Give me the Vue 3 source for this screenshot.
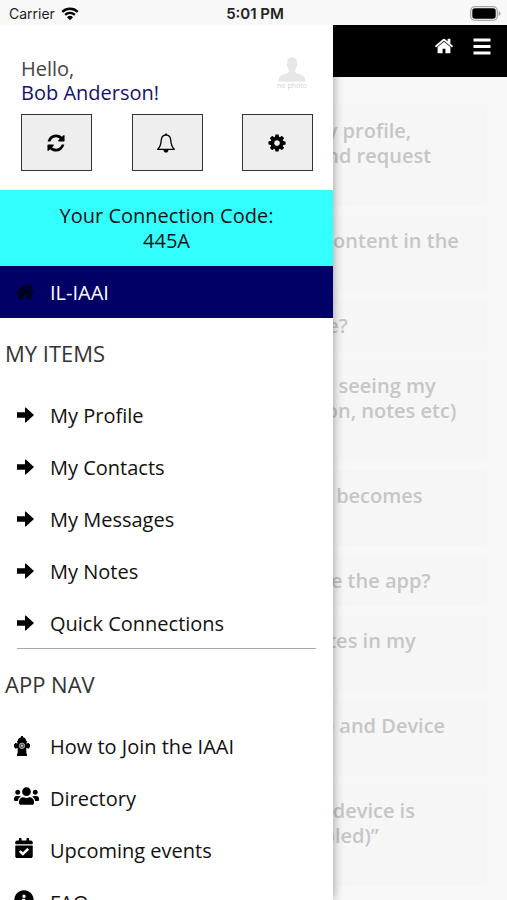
<script setup>
import { h } from 'vue'

const icons = {
  home: { box: '0 0 1792 1792', d: 'M1472 992v480q0 26-19 45t-45 19h-384v-384h-256v384h-384q-26 0-45-19t-19-45v-480q0-1 .5-3t.5-3l575-474 575 474q1 2 1 6zm223-69l-62 74q-8 9-21 11h-3q-13 0-21-7l-692-577-692 577q-12 8-24 7-13-2-21-11l-62-74q-8-10-7-23.5t11-21.5l719-599q32-26 76-26t76 26l244 204v-195q0-14 9-23t23-9h192q14 0 23 9t9 23v408l219 182q10 8 11 21.5t-7 23.5z' },
  refresh: { box: '0 0 1792 1792', d: 'M1639 1056q0 5-1 7-64 268-268 434.500t-478 166.500q-146 0-282.500-55t-243.500-157l-129 129q-19 19-45 19t-45-19-19-45v-448q0-26 19-45t45-19h448q26 0 45 19t19 45-19 45l-137 137q71 66 161 102t187 36q134 0 250-65t186-179q11-17 53-117 8-23 30-23h192q13 0 22.500 9.500t9.500 22.500zm25-800v448q0 26-19 45t-45 19h-448q-26 0-45-19t-19-45 19-45l138-138q-148-137-349-137-134 0-250 65t-186 179q-11 17-53 117-8 23-30 23h-199q-13 0-22.500-9.500t-9.500-22.500v-7q65-268 270-434.500t480-166.500q146 0 284 55.500t245 156.500l130-129q19-19 45-19t45 19 19 45z' },
  cog: { box: '0 0 1792 1792', d: 'M1152 896q0-106-75-181t-181-75-181 75-75 181 75 181 181 75 181-75 75-181zm512-109v222q0 12-8 23t-20 13l-185 28q-19 54-39 91 35 50 107 138 10 12 10 25t-9 23q-27 37-99 108t-94 71q-12 0-26-9l-138-108q-44 23-91 38-16 136-29 186-7 28-36 28h-222q-14 0-24.500-8.500t-11.500-21.500l-28-184q-49-16-90-37l-141 107q-10 9-25 9-14 0-25-11-126-114-165-168-7-10-7-23 0-12 8-23 15-21 51-66.500t54-70.500q-27-50-41-99l-183-27q-13-2-21-12.500t-8-23.500v-222q0-12 8-23t19-13l186-28q14-46 39-92-40-57-107-138-10-12-10-24 0-10 9-23 26-36 98.500-107.500t94.500-71.500q13 0 26 10l138 107q44-23 91-38 16-136 29-186 7-28 36-28h222q14 0 24.500 8.500t11.500 21.500l28 184q49 16 90 37l142-107q9-9 24-9 13 0 25 10 129 119 165 170 7 8 7 22 0 12-8 23-15 21-51 66.500t-54 70.500q26 50 41 98l183 28q13 2 21 12.500t8 23.500z' },
  arrow: { box: '0 0 20 20', d: 'M2 7.200h8V3q0-.9.800-.4L19 10l-8.200 7.400q-.8.500-.8-.4v-4.200H2z' },
  users: { box: '0 0 640 512', d: 'M96 224c35.300 0 64-28.700 64-64s-28.700-64-64-64-64 28.700-64 64 28.700 64 64 64zm448 0c35.300 0 64-28.700 64-64s-28.700-64-64-64-64 28.700-64 64 28.700 64 64 64zm32 32h-64c-17.600 0-33.500 7.100-45.100 18.600 40.300 22.100 68.900 62 75.100 109.400h66c17.700 0 32-14.300 32-32v-32c0-35.300-28.700-64-64-64zm-256 0c61.900 0 112-50.100 112-112S381.900 32 320 32 208 82.100 208 144s50.100 112 112 112zm76.800 32h-8.300c-20.800 10-43.900 16-68.500 16s-47.600-6-68.500-16h-8.300C179.600 288 128 339.600 128 403.200V432c0 26.500 21.500 48 48 48h288c26.500 0 48-21.500 48-48v-28.800c0-63.600-51.600-115.200-115.200-115.200zm-223.700-13.400C161.500 263.100 145.600 256 128 256H64c-35.300 0-64 28.700-64 64v32c0 17.700 14.300 32 32 32h65.900c6.300-47.400 34.900-87.300 75.200-109.400z' },
  calendar: { box: '0 0 448 512', d: 'M436 160H12c-6.627 0-12-5.373-12-12v-36c0-26.510 21.490-48 48-48h48V12c0-6.627 5.373-12 12-12h40c6.627 0 12 5.373 12 12v52h128V12c0-6.627 5.373-12 12-12h40c6.627 0 12 5.373 12 12v52h48c26.510 0 48 21.490 48 48v36c0 6.627-5.373 12-12 12zM12 192h424c6.627 0 12 5.373 12 12v260c0 26.510-21.490 48-48 48H48c-26.510 0-48-21.490-48-48V204c0-6.627 5.373-12 12-12zm333.296 95.947l-28.169-28.398c-4.667-4.705-12.265-4.736-16.970-.068L194.120 364.665l-45.980-46.352c-4.667-4.705-12.266-4.736-16.971-.068l-28.397 28.170c-4.705 4.667-4.736 12.265-.068 16.970l82.601 83.269c4.667 4.705 12.265 4.736 16.970.068l142.953-141.805c4.705-4.667 4.736-12.265.068-16.970z' },
  info: { box: '0 0 512 512', d: 'M256 8C119.043 8 8 119.083 8 256c0 136.997 111.043 248 248 248s248-111.003 248-248C504 119.083 392.957 8 256 8zm0 110c23.196 0 42 18.804 42 42s-18.804 42-42 42-42-18.804-42-42 18.804-42 42-42zm56 254c0 6.627-5.373 12-12 12h-88c-6.627 0-12-5.373-12-12v-24c0-6.627 5.373-12 12-12h12v-64h-12c-6.627 0-12-5.373-12-12v-24c0-6.627 5.373-12 12-12h64c6.627 0 12 5.373 12 12v100h12c6.627 0 12 5.373 12 12v24z' }
}

const Icon = (props) => h('svg', { viewBox: icons[props.name].box, 'aria-hidden': 'true' }, [
  h('path', { d: icons[props.name].d, fill: 'currentColor' })
])
Icon.props = ['name']

const myItems = ['My Profile', 'My Contacts', 'My Messages', 'My Notes', 'Quick Connections']
const appNav = [
  { label: 'How to Join the IAAI', icon: 'hydrant' },
  { label: 'Directory', icon: 'users' },
  { label: 'Upcoming events', icon: 'calendar' },
  { label: 'FAQ', icon: 'info' }
]

const questions = [
  ['How do I create and review my profile,', 'include a photo, find people and request', 'a meeting?'],
  ['Why am I unable to open the content in the', 'app?'],
  ['Where can I log in to my device?'],
  ['Why are event users no longer seeing my', 'saved activity (schedule, session, notes etc)', 'in the app?'],
  ['What do I do when this screen becomes', 'unresponsive?'],
  ['Do I need an account to update the app?'],
  ['How can I change all of the dates in my', 'calendar?'],
  ['Where is the link between App and Device', 'settings?'],
  ['Why does it say “Your present device is', 'no longer supported (not enabled)”', 'when I log in?']
]
</script>

<template>
  <div class="app">
    <div class="status">
      <span class="carrier">Carrier
        <svg class="wifi" viewBox="0 0 20 15" aria-hidden="true">
          <g fill="none" stroke="currentColor" stroke-width="2.600">
            <path d="M1.400 5.200A12.300 12.300 0 0 1 18.600 5.200" />
            <path d="M4.600 8.500A7.700 7.700 0 0 1 15.400 8.500" />
          </g>
          <path d="M10 14.500L6.700 11.100A4.700 4.700 0 0 1 13.300 11.100Z" fill="currentColor" />
        </svg>
      </span>
      <span class="time">5:01 PM</span>
      <svg class="battery" viewBox="0 0 31 15" aria-hidden="true">
        <rect x="0.700" y="0.700" width="26.600" height="13.600" rx="4" fill="#f8f8f8" stroke="#a6a6a6" stroke-width="1.300" />
        <rect x="2.300" y="2.300" width="23.400" height="10.400" rx="2.600" fill="#000" />
        <path d="M28.600 5q2 .6 2 2.500t-2 2.500z" fill="#a6a6a6" />
      </svg>
    </div>

    <div class="screen">
      <header class="topbar">
        <a href="#home" aria-label="Home"><Icon name="home" class="glyph" /></a>
        <button type="button" class="menu" aria-label="Menu">
          <svg class="glyph" viewBox="0 0 20 20" aria-hidden="true">
            <path d="M1.500 4h17M1.500 10.500h17M1.500 17h17" stroke="currentColor" stroke-width="3" />
          </svg>
        </button>
      </header>

      <main class="faq">
        <article v-for="q in questions" :key="q[0]" class="card">
          <span v-for="line in q" :key="line" class="line">{{ line }}</span>
        </article>
      </main>

      <aside class="drawer">
        <section class="profile">
          <div class="who">
            <p class="hello">Hello,<br><a href="#profile">Bob Anderson!</a></p>
            <div class="photo">
              <svg viewBox="0 0 28 25" aria-hidden="true">
                <path d="M14 0.500c3.500 0 5 2 4.900 5.500-.1 1 .6.700.5 2-.1 1-.7 1.300-1 2.300-.4 1.700-1.400 2.300-1.400 3.700 0 2 3 2.700 5.500 3.600 3.500 1.200 4.700 3 4.800 6.900H.7c.1-3.900 1.300-5.700 4.800-6.900C8 16.700 11 16 11 14c0-1.400-1-2-1.400-3.700-.3-1-.9-1.300-1-2.300-.1-1.300.6-1 .5-2C9 2.500 10.500.5 14 .5z" fill="#e8e6e8" />
              </svg>
              <span>no photo</span>
            </div>
          </div>
          <div class="actions">
            <button type="button" aria-label="Refresh"><Icon name="refresh" class="glyph" /></button>
            <button type="button" aria-label="Notifications">
              <svg class="glyph" viewBox="0 0 20 20" aria-hidden="true">
                <path d="M10 1.800C6.700 2.100 5.300 4.500 5.200 7.500 5 11.500 4.300 13.700 1.700 16.300h16.600C15.700 13.700 15 11.500 14.800 7.500 14.700 4.500 13.300 2.100 10 1.800z" fill="none" stroke="currentColor" stroke-width="1.300" stroke-linejoin="round" />
                <path d="M7.400 16.500h5.200Q12.400 19.600 10 19.600T7.400 16.500zM9.200 0.500h1.600v1.700H9.200z" fill="currentColor" />
              </svg>
            </button>
            <button type="button" aria-label="Settings"><Icon name="cog" class="glyph" /></button>
          </div>
        </section>

        <p class="code">Your Connection Code:<br>445A</p>

        <nav>
          <a href="#il-iaai" class="row current">
            <span class="slot"><Icon name="home" class="glyph shifted" /></span>IL-IAAI
          </a>
          <h2>MY ITEMS</h2>
          <div class="group">
            <a v-for="item in myItems" :key="item" href="#" class="row">
              <span class="slot"><Icon name="arrow" class="glyph shifted" /></span>{{ item }}
            </a>
          </div>
          <hr>
          <h2>APP NAV</h2>
          <div class="group">
            <a v-for="item in appNav" :key="item.label" href="#" class="row">
              <span class="slot" :class="{ raised: item.icon !== 'hydrant' }">
                <svg v-if="item.icon === 'hydrant'" class="hydrant" viewBox="0 0 16 20" aria-hidden="true">
                  <path d="M7 0h2v1.200q3 .8 3.300 3.800h.7v1.600h-.7V7.500h1V7H15v1h1v3.500h-1v1h-1.700V12h-1v5.500h.7V20H3v-2.500h.7V12h-1v.5H1v-1H0V8h1V7h1.700v.5h1V6.600H3V5h.7Q4 2 7 1.200z" fill="currentColor" />
                  <circle cx="8" cy="9.800" r="2.700" fill="#555" stroke="#bbb" stroke-width="0.800" />
                  <circle cx="8" cy="9.800" r="1" fill="#ccc" />
                </svg>
                <Icon v-else :name="item.icon" :class="item.icon" />
              </span>{{ item.label }}
            </a>
          </div>
        </nav>
      </aside>
    </div>
  </div>
</template>

<style>
body {
  margin: 0;
  background: #f8f8f8;
}
</style>

<style scoped>
.app {
  display: flex;
  flex-direction: column;
  height: 100vh;
  overflow: hidden;
  background: #f8f8f8;
  font-family: "Open Sans", "Noto Sans", sans-serif;
  font-size: 20px;
  line-height: 25px;
  color: #111;
}
a {
  color: inherit;
  text-decoration: none;
}
button {
  padding: 0;
  font: inherit;
  color: inherit;
}
.glyph {
  display: block;
  width: 20px;
  height: 20px;
}
.status {
  flex: none;
  display: grid;
  grid-template-columns: 1fr auto 1fr;
  align-items: center;
  height: 25px;
  padding: 2px 6px 0 9px;
  box-sizing: border-box;
  font-family: Inter, sans-serif;
  font-size: 14px;
  line-height: 20px;
  color: #222;
}
.carrier {
  display: flex;
  align-items: center;
  gap: 6px;
}
.wifi {
  width: 18px;
  height: 14px;
  color: #000;
}
.time {
  font-size: 15px;
  font-weight: 600;
}
.battery {
  justify-self: end;
  width: 31px;
  height: 15px;
}
.screen {
  position: relative;
  flex: 1;
  min-height: 0;
}
.topbar {
  display: flex;
  justify-content: flex-end;
  gap: 18px;
  height: 52px;
  padding: 11px 15px 0;
  box-sizing: border-box;
  background: #000;
  color: #fff;
}
.menu {
  height: 20px;
  border: 0;
  background: none;
}
.faq {
  display: flex;
  flex-direction: column;
  gap: 9px;
  padding: 28px 20px 0;
}
.card {
  padding: 13px 20px;
  border-radius: 2px;
  background: #f6f6f6;
  font-weight: 600;
  color: #c6c6c6;
}
.line {
  display: block;
  white-space: nowrap;
}
.drawer {
  position: absolute;
  top: 0;
  bottom: 0;
  left: 0;
  width: 333px;
  overflow: hidden;
  background: #fff;
  box-shadow: 0 0 10px rgba(0, 0, 0, 0.4);
  clip-path: inset(0 -16px 0 0);
}
.profile {
  padding: 32px 20px 19px 21px;
}
.who {
  display: flex;
  justify-content: space-between;
}
.hello {
  margin: 0;
  line-height: 24px;
  color: #444;
}
.hello a {
  color: #17106e;
}
.photo {
  display: flex;
  flex-direction: column;
  align-items: center;
  width: 42px;
  font-size: 7px;
  line-height: 8px;
  color: #d4d2d4;
}
.photo svg {
  width: 28px;
  height: 25px;
}
.actions {
  display: flex;
  justify-content: space-between;
  margin-top: 9px;
}
.actions button {
  display: grid;
  place-items: center;
  width: 71px;
  height: 57px;
  padding-right: 2px;
  border: 1px solid #333;
  background: #eee;
  color: #000;
}
.code {
  margin: 0;
  padding: 13px 20px;
  background: #33ffff;
  text-align: center;
}
.row {
  display: flex;
  align-items: center;
  height: 52px;
  padding-left: 14px;
}
.current {
  background: #000066;
  color: #fff;
}
.current .slot {
  color: #000018;
}
.slot {
  flex: none;
  width: 36px;
  color: #000;
}
.slot svg {
  display: block;
}
.shifted {
  margin-left: 1px;
}
.raised {
  padding-bottom: 4px;
}
.hydrant {
  width: 16px;
  height: 20px;
}
.users {
  width: 25px;
  height: 20px;
}
.calendar {
  width: 18px;
  height: 20px;
  margin-left: 1px;
}
.info {
  width: 20px;
  height: 20px;
}
h2 {
  margin: 0;
  padding: 23px 5px;
  font-size: 22px;
  font-weight: 400;
  line-height: 25px;
  color: #333;
}
hr {
  height: 1px;
  margin: -1px 17px 0;
  border: 0;
  background: #aaa;
}
</style>
